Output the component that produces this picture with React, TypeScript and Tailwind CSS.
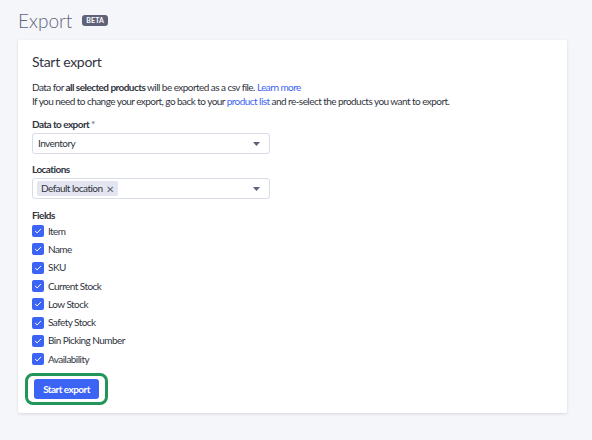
const FIELDS = [
  "Item",
  "Name",
  "SKU",
  "Current Stock",
  "Low Stock",
  "Safety Stock",
  "Bin Picking Number",
  "Availability",
]

function Caret() {
  return (
    <svg width="7" height="4" viewBox="0 0 7 4" className="text-[#5e637a]">
      <path d="M0 0h7L3.5 4z" fill="currentColor" />
    </svg>
  )
}

function Check() {
  return (
    <span className="w-[12px] h-[12px] rounded-[2px] bg-[#3c64f4] flex items-center justify-center shrink-0">
      <svg width="8" height="8" viewBox="0 0 8 8">
        <path d="M1.4 4.3l1.7 1.6L6.7 2.2" fill="none" stroke="white" strokeWidth="1" strokeLinecap="round" strokeLinejoin="round" />
      </svg>
    </span>
  )
}

export default function App() {
  return (
    <div className="w-[592px] h-[440px] bg-[#f5f6fa] px-[18px] pt-[7px] text-[#313440] tracking-[-0.55px]" style={{ fontFamily: "Lato, sans-serif" }}>
      {/* Header */}
      <div className="flex items-center gap-[10px] h-[26px]">
        <h1 className="text-[19px] font-light text-[#5e637a] leading-none tracking-normal">Export</h1>
        <span className="bg-[#5e637a] text-white text-[7px] font-bold rounded-[3px] px-[4px] h-[11px] flex items-center tracking-wide">BETA</span>
      </div>

      {/* Card */}
      <div className="mt-[7px] w-[549px] h-[373px] bg-white rounded-[2px] shadow-[0_1px_3px_rgba(49,52,64,0.15)] px-[14px] pt-[12px]">
        <h2 className="text-[14px] leading-[20px] text-[#313440] tracking-[-0.3px]">Start export</h2>

        <div className="mt-[8px] text-[10px] leading-[14px] text-[#313440]">
          <p>
            Data for <b className="font-bold">all selected products</b> will be exported as a csv file.{" "}
            <span className="text-[#3c64f4]">Learn more</span>
          </p>
          <p>
            If you need to change your export, go back to your <span className="text-[#3c64f4]">product list</span> and re-select the products you want to export.
          </p>
        </div>

        <div className="mt-[9px]">
          <p className="text-[10px] font-bold leading-[14px]">
            Data to export <span className="text-[#5e637a] font-normal">*</span>
          </p>
          <div className="mt-[2px] w-[238px] h-[21px] border border-[#d9dce9] rounded-[3px] flex items-center justify-between pl-[5px] pr-[9px] text-[10px]">
            <span>Inventory</span>
            <Caret />
          </div>
        </div>

        <div className="mt-[8px]">
          <p className="text-[10px] font-bold leading-[14px]">Locations</p>
          <div className="mt-[2px] w-[238px] h-[21px] border border-[#d9dce9] rounded-[3px] flex items-center justify-between pl-[4px] pr-[9px] text-[10px]">
            <span className="bg-[#e3e6f0] rounded-[2px] h-[15px] px-[4px] flex items-center gap-[4px]">
              Default location <span className="text-[#5e637a] text-[10px] leading-none">✕</span>
            </span>
            <Caret />
          </div>
        </div>

        <div className="mt-[9px]">
          <p className="text-[10px] font-bold leading-[14px]">Fields</p>
          <div className="flex flex-col">
            {FIELDS.map((f) => (
              <label key={f} className="h-[18.3px] flex items-center gap-[4px] text-[10px]">
                <Check />
                <span className="text-[#313440]">{f}</span>
              </label>
            ))}
          </div>
        </div>

        <div className="mt-[5px] ml-[-7px] w-[83px] h-[32px] border-[3px] border-[#22965a] rounded-[8px] flex items-center justify-center">
          <button className="w-[65px] h-[20px] rounded-[3px] bg-[#3c64f4] text-white text-[10px] font-bold">
            Start export
          </button>
        </div>
      </div>
    </div>
  )
}
